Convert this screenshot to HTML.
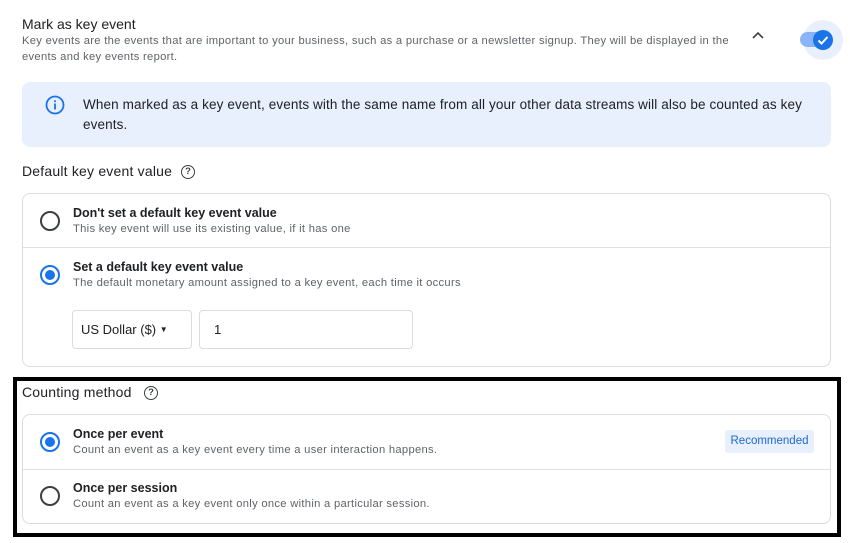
<!DOCTYPE html>
<html><head><style>
*{margin:0;padding:0;box-sizing:border-box}
body{width:850px;height:543px;background:#fff;position:relative;overflow:hidden;font-family:"Liberation Sans",Arial,sans-serif;color:#202124}
.a{position:absolute;white-space:nowrap}
.t{font-size:14px;color:#202124;letter-spacing:.2px}
.s{font-size:11.2px;color:#5f6368;letter-spacing:.3px}
.b{font-size:12.5px;font-weight:bold;color:#202124}
.card{position:absolute;left:22px;width:809px;border:1px solid #dadce0;border-radius:8px}
.div{position:absolute;left:0;right:0;height:1px;background:#e0e0e0}
.r{position:absolute;width:20px;height:20px;border-radius:50%;border:2px solid #3c4043}
.r.on{border-color:#1a73e8}
.r.on::after{content:"";position:absolute;left:3px;top:3px;width:10px;height:10px;border-radius:50%;background:#1a73e8}
.q{position:absolute;width:14px;height:14px;border:1.3px solid #3c4043;border-radius:50%;font-size:9.5px;text-align:center;line-height:12px;font-weight:bold;color:#3c4043}
</style></head><body>
<div class="a t" style="left:22px;top:16px;font-size:14px;letter-spacing:0">Mark as key event</div>
<div class="a s" style="left:22px;top:34px;line-height:15.5px;white-space:normal;width:730px;letter-spacing:.3px">Key events are the events that are important to your business, such as a purchase or a newsletter signup. They will be displayed in the events and key events report.</div>
<svg class="a" style="left:751px;top:30px" width="14" height="10"><path d="M2 8 L7 3 L12 8" fill="none" stroke="#3c4043" stroke-width="1.6"/></svg>
<div class="a" style="left:803px;top:20px;width:40px;height:40px;border-radius:50%;background:#e8f0fe"></div>
<div class="a" style="left:800px;top:32px;width:30px;height:15px;border-radius:8px;background:#8ab4f8"></div>
<div class="a" style="left:813px;top:30px;width:20px;height:20px;border-radius:50%;background:#1a73e8"></div>
<svg class="a" style="left:813px;top:30px" width="20" height="20"><path d="M5.5 10.5 L8.5 13.5 L14.5 7" fill="none" stroke="#fff" stroke-width="2"/></svg>

<div class="a" style="left:22px;top:82px;width:809px;height:65px;border-radius:8px;background:#e8f0fe"></div>
<svg class="a" style="left:45px;top:95px" width="20" height="20"><circle cx="10" cy="10" r="8.5" fill="none" stroke="#1a73e8" stroke-width="1.8"/><rect x="9.1" y="8.5" width="1.8" height="6" fill="#1a73e8"/><rect x="9.1" y="5.3" width="1.8" height="1.8" fill="#1a73e8"/></svg>
<div class="a" style="left:83px;top:95px;width:735px;white-space:normal;font-size:13.5px;letter-spacing:.12px;line-height:20px;color:#202124">When marked as a key event, events with the same name from all your other data streams will also be counted as key events.</div>

<div class="a t" style="left:22px;top:163px">Default key event value</div>
<div class="q" style="left:181px;top:165px">?</div>

<div class="card" style="top:193px;height:174px">
 <div class="r" style="left:17px;top:17px"></div>
 <div class="a b" style="left:50px;top:12px">Don't set a default key event value</div>
 <div class="a s" style="left:50px;top:29px">This key event will use its existing value, if it has one</div>
 <div class="div" style="top:53px"></div>
 <div class="r on" style="left:17px;top:71px"></div>
 <div class="a b" style="left:50px;top:66px">Set a default key event value</div>
 <div class="a s" style="left:50px;top:83px">The default monetary amount assigned to a key event, each time it occurs</div>
 <div class="a" style="left:49px;top:116px;width:120px;height:39px;border:1px solid #dadce0;border-radius:4px;font-size:13px;padding:11px 8px;color:#202124">US Dollar ($) <span style="font-size:8px;position:relative;top:-2px">▼</span></div>
 <div class="a" style="left:176px;top:116px;width:214px;height:39px;border:1px solid #dadce0;border-radius:4px;font-size:13px;padding:11px 14px">1</div>
</div>

<div class="a" style="left:13px;top:377px;width:828px;height:160px;border:4px solid #000"></div>
<div class="a t" style="left:22px;top:384px">Counting method</div>
<div class="q" style="left:144px;top:386px">?</div>
<div class="card" style="top:414px;height:110px">
 <div class="r on" style="left:17px;top:17px"></div>
 <div class="a b" style="left:50px;top:12px">Once per event</div>
 <div class="a s" style="left:50px;top:29px">Count an event as a key event every time a user interaction happens.</div>
 <div class="a" style="left:702px;top:15px;width:89px;height:23px;background:#e8f0fe;border-radius:3px;color:#1967d2;font-size:11.5px;text-align:center;line-height:23px">Recommended</div>
 <div class="div" style="top:54px"></div>
 <div class="r" style="left:17px;top:71px"></div>
 <div class="a b" style="left:50px;top:66px">Once per session</div>
 <div class="a s" style="left:50px;top:83px">Count an event as a key event only once within a particular session.</div>
</div>
</body></html>
